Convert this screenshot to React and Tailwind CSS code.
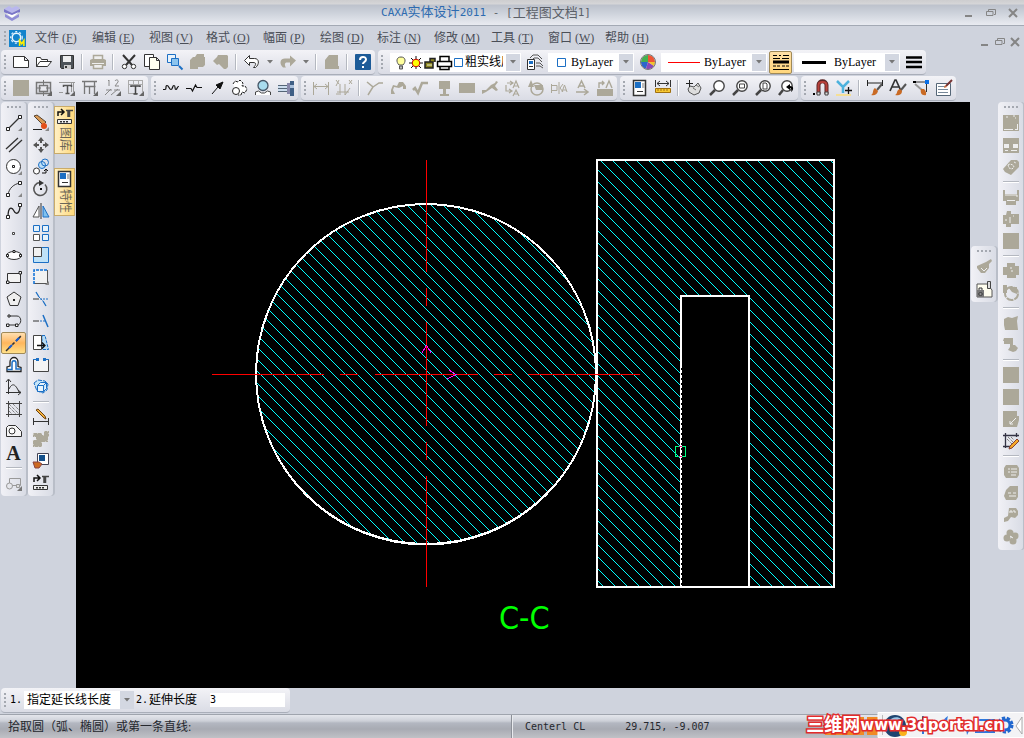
import React, { useState } from 'react';
import clsx from 'clsx';

const G = '#aca899';
const K = '#333333';
const B = '#1c6fc4';

// All icons are drawn on a 16x16 grid
const icons = {
  new: <path d="M.5 2.500h11l4 4v7H.5zM11.500 2.500v4h4" fill="#fff" stroke={K} />,
  open: <path d="M.5 12.500v-9h4l1 2h6v2M.5 12.500l3.500-5h11.500l-4 5z" fill="#fff" stroke={K} />,
  save: <><path d="M1.500 1.500h13v13h-12l-1-1z" fill="#4d5358" stroke={K} /><path d="M4 2h8v6H4z" fill="#eee" /><path d="M5 11h7v4H5z" fill="#ccc" /><path d="M6 12h2v2H6z" fill={K} /></>,
  print: <><path d="M3.500 5V1.500h9V5" fill="#eee" stroke={G} strokeWidth="1.500" /><path d="M0 6l2-1h12l2 1v6H0z" fill={G} /><path d="M2 9.500h12" stroke="#eee" /><path d="M3.500 11v3.500h9V11" fill="#eee" stroke={G} strokeWidth="1.500" /></>,
  cut: <><path d="M2 1l9 10M14 1L5 11" stroke={K} strokeWidth="2" /><circle cx="3.500" cy="12.500" r="2.200" fill="#fff" stroke={K} /><circle cx="12.500" cy="12.500" r="2.200" fill="#fff" stroke={K} /></>,
  copy: <><path d="M.5.5h9v12h-9z" fill="#fff" stroke={K} /><path d="M5.500 3.500h7l3 3v9h-10zM12.500 3.500v3h3" fill="#fffff0" stroke={K} /></>,
  zoomWin: <><path d="M.5.5h8v8h-8z" fill="#e8f2fa" stroke={B} /><path d="M4.500 4.500h7v7h-7z" fill="#8cc4ee" stroke={B} /><path d="M12 12l3.500 3.500" stroke={B} strokeWidth="2" /></>,
  paste: <path d="M5 3l2-3h7v3h1v8l-2 2H8v2H0V6l3-3z" fill={G} />,
  paste2: <path d="M5 1h9l1 1v11l-2 2h-2l-5-5-2 1-4-4 4-4z" fill={G} />,
  undo: <path d="M.5 6.500l5-5v3h5c5 0 5 6 1 9h-2c3-3 3-5-.5-5H5.500v3z" fill="#fff" stroke={K} />,
  redo: <path d="M16 6.500l-6-5v3H5c-5 0-6 5-2 9h3c-2-3-1-5 1-5h3v4z" fill={G} />,
  page: <path d="M1 6l4-5h9v11h1v3H1z" fill={G} />,
  help: <><rect x="0" y="0" width="16" height="16" rx="1" fill="#1c5b98" /><path d="M5 6c0-4 6-4 6-.5C11 8 8 8 8 10M8 12v2" stroke="#fff" strokeWidth="2" fill="none" /></>,
  layers: <><path d="M3 4l3-3h5l4 4M5 6l2-2h4l4 4M9 9h4l3 3M9 12h4l3 2" fill="none" stroke="#555" /><path d="M.5 5.500h7v10h-7z" fill="#fff" stroke={K} /><path d="M2 7h4v3H2z" fill={B} /><path d="M2 12.500h4" stroke={K} /></>,
  ball: <><circle cx="8" cy="8" r="7.500" fill="#ddd" /><path d="M8 8V1a7 7 0 0 1 7 7z" fill="#ee5533" /><path d="M8 8V1a7 7 0 0 0-7 7z" fill="#45b050" /><path d="M8 8H1a7 7 0 0 0 5 6.700z" fill="#2b66cc" /><path d="M8 8l-2 6.700A7 7 0 0 0 14 12z" fill="#8b46b8" /><path d="M8 8h7a7 7 0 0 1-1 4z" fill="#f2c22e" /><circle cx="8" cy="8" r="7.500" fill="none" stroke="#777" /></>,
  dashes: <><path d="M0 1.500h4M6 1.500h2M10 1.500h6" stroke="#000" /><path d="M0 4.500h7M9 4.500h7" stroke="#000" /><path d="M0 8h16" stroke="#000" strokeWidth="3" /><path d="M0 12h3M4 12h3M9 12h3M13 12h3M0 15.500h16" stroke="#000" /></>,
  weights: <path d="M0 3.500h16M0 8h16M0 13h16" stroke="#000" strokeWidth="2.500" />,

  block: <path d="M0 0h16v16H0z" fill={G} />,
  frame: <><path d="M.5 2.500h14v11H.5zM3.500 5.500h8v6h-8z" fill="none" stroke="#777" strokeWidth="1.500" /><path d="M7.500 0v5M7.500 11v5M0 8h5M10 8h5" stroke="#777" /><path d="M5 7h5v3H5z" fill="#e8e9ee" /><path d="M16 11v5h-5z" fill="#666" /></>,
  titleT: <><path d="M0 2.500h16M0 12.500h4M14.500 3v9M12.500 3v9" stroke="#999" /><path d="M4.500 7V5.500h8V7M8.500 6v7M6.500 13.500h4" stroke="#555" strokeWidth="1.500" fill="none" /><path d="M16 11v5h-5z" fill="#666" /></>,
  grid: <><path d="M0 1.500h15M2.500 6.500h11M2.500 1v13M7.500 6v8M12.500 2v12" stroke="#777" strokeWidth="1.300" /><path d="M16 11v5h-5z" fill="#666" /></>,
  seq: <><path d="M3 1l1-1v6M10 1c1-2 4-1 3 1l-3 4h4M0 15l6-6M6 15l7-6M1 10h6M9 10h6" fill="none" stroke="#888" /><path d="M16 11v5h-5z" fill="#666" /></>,
  tableT: <><path d="M.5 0v14M0 .5h15M0 4.500h15M0 13.500h10M14.500 0v12M5.500 0v4M10.500 0v4" stroke="#aaa" /><path d="M3 7V6h9v1M7.500 6v8M5.500 14h4" stroke="#444" strokeWidth="1.500" fill="none" /><path d="M16 11v5h-5z" fill="#666" /></>,
  wave: <path d="M0 9.500h2c2 0 0-4 2-4s2 4 4 4 1-4 3-4 0 4 2 4c1.500 0 .5-3 3-3" fill="none" stroke="#111" strokeWidth="1.200" />,
  breakLine: <path d="M0 8.500h5l1.500 2.500 3-6L11 7.500h5" fill="none" stroke="#111" strokeWidth="1.200" />,
  arrow: <path d="M3 14l6-7M14 2L7 5l4 4z" fill="#111" stroke="#111" />,
  gears: <><path d="M1 4l2-3 3 1 2-2 3 3-1 3h3l2 3-2 4-3-1-1 3h-3" fill="#fff" stroke="#222" strokeDasharray="3 1" /><circle cx="4" cy="11" r="3.500" fill="#fff" stroke="#222" /><circle cx="4" cy="11" r="1" /></>,
  mag: <><circle cx="8" cy="5.500" r="5" fill="#a8dcee" stroke="#456" strokeWidth="1.300" /><path d="M.5 15v-3l3-1 3 2h3l3-2 3 1v3" fill="#fff" stroke="#444" /></>,
  shaft: <><path d="M0 5h9v7H0z" fill="#cde" /><path d="M0 5.500h9M0 8.500h9M0 11.500h9" stroke="#567" /><path d="M9 3h3v11H9z" fill="#88a" /><path d="M12 1h4v15h-4z" fill="#3f5f85" /><path d="M12 5h4v3h-4z" fill="#a9c0dc" /></>,
  dimH: <path d="M.5 2v13M15.500 2v13M1 6.500h14M4 4L1 6.500 4 9M12 4l3 2.500L12 9" fill="none" stroke={G} />,
  dimX: <path d="M0 0l3 4M3 0L0 6M13 0l3 4M16 0l-3 4M1 12h12M4 4v11M9 4v11l5-7M0 14h3" fill="none" stroke={G} />,
  chamfer: <path d="M0 2l6 5-5 8M6 7l6-4h4" fill="none" stroke={G} strokeWidth="1.500" />,
  tol: <path d="M1 14v-4l2-5 4 1 2-4h4l3 4v3h-3V6l-4 2-5-1-1 3 2 4z" fill={G} />,
  rough: <path d="M0 10l2-2 3 5 4-10h6" fill="none" stroke={G} strokeWidth="2.500" />,
  datum: <path d="M3 1h11v8H10v5h3v2H4v-2h3V9H3z" fill={G} />,
  rect: <path d="M0 3h16v10H0z" fill={G} />,
  weld: <path d="M0 14v-4l4 0 5-5 4-2 1-2 2 1-3 4 3 4-2 1-4-3-6 4z" fill={G} />,
  textFlow: <path d="M2 3h5M5 1l3 2-3 2M1 5v6h5M4 9l3 2-3 2M8 8l3-7 3 7M9 6h4M8 16l3-6 3 6M9 14h4" fill="none" stroke={G} strokeWidth="1.200" />,
  cycle: <><circle cx="9" cy="9" r="6" fill="none" stroke={G} strokeWidth="1.500" /><path d="M6 5h9v5H8zM0 7l3-7 3 7z" fill={G} /></>,
  ka: <path d="M.5 4v9M0 5.500h6v5H1M8 2v12M9 8l3-4M9 8l3 4M11 12l2.500-7 2.500 7M12 10h3" fill="none" stroke={G} />,
  aLine: <path d="M4 8l3.500-7L11 8M5 6h5M2 12h11M10 9l4 3-4 3" fill="none" stroke={G} strokeWidth="1.500" />,
  aBox: <><path d="M0 9h16v7H0z" fill={G} /><path d="M2 8V3h5M5 1l2 2-2 2M9 8l3-7 3 7" fill="none" stroke={G} strokeWidth="1.400" /></>,
  props: <><path d="M1.500.5h12v15h-12z" fill="#fff" stroke={K} strokeWidth="1.500" /><path d="M3 2h6v6H3z" fill={B} /><path d="M10 3h3v5h-3z" fill="#bbb" /><path d="M5 11.500h6" stroke={K} /></>,
  ruler: <><path d="M.5 0v7M15.500 0v7M2 3.500h12M5 1L2 3.500 5 6M11 1l3 2.500L11 6" fill="none" stroke="#333" /><path d="M.5 8.500h15v4H.5z" fill="#f7c832" stroke="#a07010" /><path d="M3 9v2M6 9v2M9 9v2M12 9v2" stroke="#a07010" /></>,
  hand: <><path d="M4 6l4 1 4-4 3 5-2 5-5 2-5-3-1-3z" fill="#ddd" stroke="#555" /><path d="M7 8l3 2M10 5l3 2" stroke="#777" /><path d="M3.500 0v7M0 3.500h7" stroke="#222" /></>,
  lens: <><circle cx="10" cy="6" r="5.200" fill="#fff" stroke="#444" strokeWidth="1.400" /><path d="M6 10l-5 5" stroke="#444" strokeWidth="2.500" /></>,
  lensBox: <><circle cx="10" cy="6" r="5.200" fill="#fff" stroke="#444" strokeWidth="1.400" /><path d="M7.500 4h5v4h-5z" fill="none" stroke="#444" /><path d="M6 10l-5 5" stroke="#444" strokeWidth="2.500" /></>,
  lensPage: <><circle cx="10" cy="6" r="5.200" fill="#fff" stroke="#444" strokeWidth="1.400" /><path d="M8 3h3l1 1v5H8z" fill="none" stroke="#444" /><path d="M6 10l-5 5" stroke="#444" strokeWidth="2.500" /></>,
  lensBack: <><circle cx="9" cy="6" r="5.200" fill="#fff" stroke="#444" strokeWidth="1.400" /><path d="M8 7l4-3v2c4 0 4 4 1 6 1-3 0-4-1-4v2z" fill="#000" /><path d="M5 10l-4 5" stroke="#444" strokeWidth="2.500" /></>,
  magnet: <><path d="M5.500 14V5c0-5 8-5 8 0v9" fill="none" stroke="#5a2626" strokeWidth="4" /><path d="M5.500 13V5c0-4 8-4 8 0v8" fill="none" stroke="#b8403a" strokeWidth="2" /><path d="M4 12h3v3H4zM12 12h3v3h-3z" fill="#ddd" stroke="#444" /><path d="M0 13h2v2H0z" fill="#000" /></>,
  axes: <><path d="M1 1l6 6 6-6M7 7v6" fill="none" stroke="#4db2dd" strokeWidth="2.500" /><path d="M12.500 7v7M9 10.500h7" stroke="#111" strokeWidth="1.300" /><path d="M0 15h15" stroke="#f5df95" strokeWidth="2" /></>,
  brushDim: <><path d="M.5 0v6M15.500 0v6M1 3h14" stroke="#222" /><path d="M15 4l-5 6" stroke="#555" strokeWidth="2" /><path d="M8 8l3 3c-1 4-4 5-7 4 3-1 1-5 4-7z" fill="#c96a24" /></>,
  brushA: <><path d="M0 11L5 0h1l5 11M2 7h7" fill="none" stroke="#333" strokeWidth="1.700" /><path d="M16 4l-5 6" stroke="#555" strokeWidth="2" /><path d="M10 9l2 2c0 4-4 5-7 4 3-1 1-5 5-6z" fill="#c96a24" /></>,
  brushNode: <><path d="M1 2h11M13.500 3v9" stroke="#333" /><path d="M0 1h3v2H0z" fill="#000" /><path d="M12 0h4v4h-4z" fill="#0a70e8" /><path d="M2 4l7 6" stroke="#999" strokeWidth="2" /><path d="M8 9h3c3 3 2 5 2 6-4 1-6-2-5-6z" fill="#c96a24" /></>,
  editTable: <><path d="M.5 3.500h14v12H.5z" fill="#fff" stroke="#567" /><path d="M2 6.500h7M2 9.500h10M2 12.500h10" stroke="#789" /><path d="M16 0l-6 6" stroke="#733" strokeWidth="2" /><path d="M9 5l2 2-3 1z" fill="#c63" /></>,

  line: <><path d="M2 14L14 2" stroke={K} strokeWidth="1.300" /><path d="M.5 12.500h3v3h-3zM12.500.5h3v3h-3z" fill="#fff" stroke="#222" /><path d="M16 12v4h-4z" fill="#888" /></>,
  parallel: <path d="M0 12L12 1M3 15L16 3" stroke={K} strokeWidth="1.300" />,
  circle: <><circle cx="7.500" cy="7.500" r="7" fill="#fff" stroke={K} /><path d="M6.500 6.500h2v2h-2z" stroke="#222" /><path d="M16 12v4h-4z" fill="#888" /></>,
  arc: <><path d="M2 14C3 7 8 3 14 2" fill="none" stroke={K} /><path d="M.5 12.500h3v3h-3zM12.500.5h3v3h-3z" fill="#fff" stroke="#222" /><path d="M16 12v4h-4z" fill="#888" /></>,
  spline: <><path d="M2 14C2 3 6 4 8 8s6 3 6-6" fill="none" stroke="#222" strokeWidth="1.300" /><path d="M.5 12.500h3v3h-3zM12.500.5h3v3h-3z" fill="#fff" stroke="#222" /></>,
  point: <path d="M6.500 7.500h2v2h-2z" fill="#fff" stroke="#444" />,
  ellipse: <><ellipse cx="8" cy="8.500" rx="7.500" ry="4" fill="#fff" stroke={K} /><path d="M.5 7.500h2v2h-2zM13.500 7.500h2v2h-2zM7 3.500h2v2H7z" fill="#fff" stroke="#222" /></>,
  rectangle: <><path d="M1.500 4.500h13v9h-13z" fill="#f3f3f3" stroke={K} /><path d="M.5 12h2.500v2.500H.5zM13 2.500h2.500V5H13z" fill="#fff" stroke="#222" /></>,
  polygon: <><path d="M8 1l7 5-3 8.500H4L1 6z" fill="#eee" stroke={K} /><path d="M7 8h2v2H7z" fill="#222" /></>,
  polyline: <><path d="M4 3h7c5 0 5 9 0 9H3" fill="none" stroke={K} /><path d="M2 2h2v2H2zM.5 11h2.500v2.500H.5zM9.500 11h2.500v2.500H9.500z" fill="#fff" stroke="#222" /></>,
  center: <><path d="M0 16L16 0" stroke="#333" strokeDasharray="7 2 3 2" strokeWidth="1.500" /><path d="M3 13l3-3M10 6l3-3" stroke="#1b5fd0" strokeWidth="2" /></>,
  offset: <><path d="M1 14.500h14v-4l-3-1V5c0-6-8-6-8 0v4l-3 1z" fill="#fff" stroke="#222" strokeWidth="1.300" /><path d="M1 12.500h5V6c0-3 4-3 4 0v6h5" fill="none" stroke={B} strokeWidth="1.500" /></>,
  formula: <path d="M2.500 15V1M0 3l2.500-3L5 3M0 13.500h15M12 11l3 2.500-3 2.500M3 10c3-6 6-6 10 3" fill="none" stroke="#333" />,
  hatch: <><path d="M2.500 0v16M13.500 0v16M0 2.500h16M0 13.500h16" stroke="#444" /><path d="M3 10l4 4M3 6l8 8M3 3l10 10M7 3l6 6" stroke="#555" strokeDasharray="1 1" /></>,
  region: <><path d="M.5 4.500l2-2h7l6 6v5h-15z" fill="#f6f6f6" stroke={K} /><circle cx="6" cy="8" r="3" fill="#fff" stroke={K} /></>,
  blockIns: <><path d="M3.500 3.500h11v7h-11z" fill="none" stroke="#999" /><circle cx="3.500" cy="11" r="3" fill="#e6e7ec" stroke="#999" /><path d="M10.500 9.500h3v3h-3z" fill="#ddd" stroke="#999" /><path d="M16 11v5h-5z" fill="#777" /></>,
  eraser: <><path d="M1 1l9 9 3-3L4 0z" fill="#d99a55" stroke="#543" /><circle cx="11" cy="11" r="3" fill="#e3501a" /><path d="M0 14.500h9" stroke="#222" /><path d="M16 12v4h-4z" fill="#888" /></>,
  move: <path d="M8 0l3 4H9v2H7V4H5zM8 16l3-4H9v-2H7v2H5zM0 8l4-3v2h2v2H4v2zM16 8l-4-3v2h-2v2h2v2z" fill="#555" />,
  copyObj: <><circle cx="9" cy="6" r="3.500" fill="#bfe0f7" stroke={B} /><circle cx="12" cy="3.500" r="3.500" fill="none" stroke={B} /><circle cx="3.500" cy="12" r="3" fill="#fff" stroke="#333" /><path d="M9 14h4v-3M11 12l2-2 2 2" fill="none" stroke="#111" /></>,
  rotate: <><path d="M7 1.500a6.500 6.500 0 1 0 5 2" fill="none" stroke="#555" strokeWidth="1.500" /><path d="M6-1l5 3-5 3z" fill="#333" /><path d="M7 7h2v2H7z" fill="#111" /></>,
  mirror: <><path d="M6 3v11H0z" fill="#fff" stroke="#555" /><path d="M8 0v16" stroke="#333" /><path d="M10 3v11h6z" fill="#7fc1ee" stroke={B} /></>,
  array: <><path d="M.5.5h6v6h-6zM9.500.5h6v6h-6z" fill="#e5f2fb" stroke={B} /><path d="M9.500 9.500h6v6h-6z" fill="#e5f2fb" stroke={B} /><path d="M.5 9.500h6v6h-6z" fill="#fff" stroke="#555" /></>,
  scale: <><path d="M.5.5h15v15H.5z" fill="#bfe2f8" stroke={B} /><path d="M.5.5h8v9h-8z" fill="#f1f1f1" stroke="#444" /></>,
  stretch: <><path d="M1 1h13v13H1z" fill="#f1f1f1" /><path d="M1 14.500h13.500V1" stroke="#555" /><path d="M1 15V1h13" fill="none" stroke="#0a6fd8" strokeDasharray="3 1" strokeWidth="1.500" /><path d="M16 12v4h-4z" fill="#888" /></>,
  trim: <><path d="M3 1l3 5M10 10l3 5" stroke={B} strokeWidth="1.300" /><path d="M0 8h6" stroke="#333" /><path d="M7 8h9M6 6l4 4" stroke={B} strokeDasharray="2 1" /></>,
  extend: <><path d="M10 2l5 12" stroke={B} strokeWidth="1.500" /><path d="M0 8h6" stroke="#333" /><path d="M7 8h5" stroke={B} strokeDasharray="2 1" /></>,
  stretchPage: <><path d="M9 .5h3l3.500 14H9z" fill="#b6dcf5" stroke={B} strokeDasharray="3 1" /><path d="M.5.5h8v14h-8z" fill="#fff" stroke="#444" /><path d="M4 10.500h8M9 7.500l3 3-3 3" fill="none" stroke="#111" strokeWidth="1.300" /></>,
  breakObj: <><path d="M.5 3v11.500h15V3" fill="#f4f4f4" stroke="#444" /><path d="M0 2.500h4M12 2.500h4" stroke={B} /><path d="M3 1h3v3H3zM10 1h3v3h-3z" fill={B} /></>,
  explode: <><path d="M1 4l4-3 7 1 3 3-1 6-4 3-6-2z" fill="#c5e4f8" stroke={B} strokeDasharray="4 1" /><path d="M4.500 6.500h6v6h-6zM4.500 6.500l3-3h6l-3 3M13.500 3.500v6l-3 3" fill="#e8f4fc" stroke={B} /></>,
  pencilDim: <><path d="M.5 9v7M15.500 9v7M1 12.500h14" stroke="#333" /><path d="M3 1l8 8 2 1-1-3-7-7z" fill="#f5b13c" stroke="#6b4210" /></>,
  puzzle: <path d="M0 2h9v2h2V0h5v6h-1v5H9v5H0V9h3V6H0z" fill={G} stroke="#e8e8e8" strokeDasharray="1 3" />,
  brushCard: <><path d="M4.500.5h11v11h-11z" fill="#fff" stroke="#445" /><path d="M6 2h6v6H6z" fill="#14508c" /><path d="M0 9h6l3 2-3 4H2z" fill="#cc6a22" stroke="#844" /></>,
  library: <><path d="M1 7V3h5M4 0l3 3-3 3" fill="none" stroke="#111" strokeWidth="1.500" /><path d="M9 1.500h7M12.500 2v6M11 2v6" stroke="#444" strokeWidth="1.500" /><path d="M.5 10.500h14v4H.5z" fill="#eee" stroke="#333" /><path d="M3 12h2v1.500H3zM6 12h2v1.500H6zM9 12h2v1.500H9z" fill="#333" /></>,

  rBlock: <><path d="M0 0h16v16H0z" fill={G} /><path d="M3 2h2M10 1h2M12 3h1M14.500 9v5M1 14.500h9M12 14.500h3" stroke="#eee" /></>,
  rPanel: <><path d="M0 1h16v15H0z" fill={G} /><path d="M1 7h5v4H1zM10 7h5v4h-5zM2 13h3v1H2zM8 13h6v1H8z" fill="#eee" /></>,
  rGear: <><path d="M8 1h6l2 2v5l-8 8-6-3-2-3z" fill={G} /><path d="M5 6l2-1 3 1 1 2-2 2-3-1zM11 3l2 1" fill="none" stroke="#eee" strokeDasharray="2 1" /></>,
  rPrint: <><path d="M0 1h2v4h12V1h2v11h-3v4H3v-4H0z" fill={G} /><path d="M2 6h12v2M4 11.500h8" fill="none" stroke="#eee" /></>,
  rPuzzle: <><path d="M4 0h4v3h8v10H8v3H3v-3H0V4h3z" fill={G} /><path d="M7 6v6M10 5h1M3 8v2" stroke="#eee" /></>,
  rChip: <><path d="M4 0h8v3h4v9h-3v3H4v-3H0V4h4z" fill={G} /><path d="M7 5h2M8 8h2" stroke="#eee" /></>,
  rCycle: <><circle cx="8.500" cy="8.500" r="6.500" fill="none" stroke={G} strokeWidth="2" strokeDasharray="7 1" /><path d="M5 2h9v7l-5-2zM0 0h4v8H0z" fill={G} /></>,
  rFolder: <path d="M1 4l4-2 4 1 6-2-1 5 1 9H2l-1-5z" fill={G} />,
  rFlow: <path d="M1 1h9v7h2l3 3-2 3-3 1-5-2 2-3V7H1V4H0z" fill={G} />,
  rDiag: <><path d="M0 0h14v5h2v4l-2 7H0z" fill={G} /><path d="M7 13l6-6M7 10v3h3" fill="none" stroke="#eee" /></>,
  hatchEdit: <><path d="M2.500 0v15M0 2.500h16M13.500 0v4M0 13.500h8" stroke="#334" strokeWidth="1.300" /><path d="M4 6l5 5M5 4l6 6M8 4l3 3" stroke="#555" strokeDasharray="1 1" /><path d="M14 6l2 2-7 7-3 1 1-3z" fill="#f5a928" stroke="#843" /></>,
  rList: <><path d="M3 2h11l2 3v7l-2 3H3l-2-3V5z" fill={G} /><path d="M5 6h2M8 6h6M5 9h2M8 9h6M8 12h5" stroke="#eee" /></>,
  rPage: <><path d="M7 1h8v11l-2 3H3l-2-4 2-6z" fill={G} /><path d="M5 8h3M10 8h3M6 11h7" stroke="#eee" /></>,
  rLens: <><path d="M6 1h7l2 3v4l-3 3-4-1-3 4-4 1v-4l4-2z" fill={G} /><path d="M7 6V4h2v2M11 3v2h2" fill="none" stroke="#eee" /></>,
  rBubbles: <><circle cx="7" cy="4" r="3.500" fill={G} /><circle cx="12" cy="7" r="3.500" fill={G} /><circle cx="4" cy="9" r="3.500" fill={G} /><circle cx="10" cy="12" r="3.500" fill={G} /><path d="M7 7l3 2" stroke="#eee" /></>,
  tag: <><path d="M1 7l9-4 5-3 1 2-3 3v4l-4 5H5L1 9z" fill={G} /><path d="M5 9l3 3 3-3" stroke="#eee" /></>,
  lockCard: <><path d="M1 3h10l5 6v7H1z" fill="#fffef0" stroke="#555" /><path d="M11.500.5h3v7h-3z" fill="#ddd" stroke="#444" /><path d="M1 9h7v7H1z" fill="#777" /><path d="M3 9V7h3v2M3 12h3v2H3z" fill="#eee" stroke="#333" /></>,
};

const Icon = ({ name }) => (
  <svg viewBox="0 0 16 16" className="h-4 w-4 shrink-0 overflow-visible" fill="none" aria-hidden="true">
    {icons[name]}
  </svg>
);

const Grip = ({ vertical }) => (
  <div className={clsx('flex shrink-0 items-center justify-center gap-0.5', vertical ? 'h-2.5 w-full' : 'w-2 flex-col')}>
    {[0, 1, 2, 3].map((i) => (
      <span key={i} className="h-0.5 w-0.5 bg-[#a4a8b0]" />
    ))}
  </div>
);

const Caret = () => (
  <svg viewBox="0 0 6 4" className="h-1 w-1.5" aria-hidden="true">
    <path d="M0 0h6L3 3.500z" fill="#777" />
  </svg>
);

const Tool = ({ name, vertical, active }) => {
  if (name === '|') {
    return vertical ? (
      <div className="flex h-2 w-full items-center justify-center">
        <span className="h-0.5 w-4 border-b border-white bg-[#b4b8c0]" />
      </div>
    ) : (
      <div className="flex w-2 shrink-0 items-center justify-center">
        <span className="h-4 w-0.5 border-r border-white bg-[#b4b8c0]" />
      </div>
    );
  }
  if (name === 'v') {
    return (
      <button aria-label="more" className="flex w-[13px] shrink-0 items-center justify-center">
        <Caret />
      </button>
    );
  }
  return (
    <button
      aria-label={name}
      className={clsx(
        'flex shrink-0 items-center justify-center',
        vertical ? 'h-[22px] w-full' : 'h-[23px] w-[23px]',
        active && 'rounded-xs border border-[#a08a58]',
        active && (vertical ? 'bg-gradient-to-b from-[#ffdfb0] via-[#ffb65c] to-[#ffe08a]' : 'bg-gradient-to-b from-[#ffe0a6] to-[#ffd67c]')
      )}
    >
      {name === 'text' ? (
        <span className="font-['Liberation_Serif',serif] text-[20px] leading-5 font-bold text-[#222]">A</span>
      ) : (
        <Icon name={name} />
      )}
    </button>
  );
};

const Bar = ({ tools, children }) => (
  <div className="flex h-[25px] items-center rounded border-b border-[#a9aeb9] bg-gradient-to-b from-[#f3f3f7] to-[#dadce5] pr-px">
    <Grip />
    {tools?.map((t, i) => <Tool key={i} name={t} />)}
    {children}
  </div>
);

const SideBar = ({ tools, activeTool, className }) => (
  <div className={clsx('flex w-[25px] shrink-0 flex-col self-start rounded-sm bg-gradient-to-r from-[#f1f1f6] to-[#d9dce5] pb-0.5 shadow-[2px_0_0_#b9bec8]', className)}>
    <Grip vertical />
    {tools.map((t, i) => <Tool key={i} name={t} vertical active={t === activeTool} />)}
  </div>
);

const Combo = ({ label, className, icon, value, selectClass }) => (
  <div className={clsx('flex h-[19px] shrink-0 items-stretch border border-white bg-white', className)}>
    {icon}
    <select
      aria-label={label}
      className={clsx("min-w-0 flex-1 appearance-none overflow-hidden bg-white text-[12px] leading-4 whitespace-nowrap text-black outline-none font-['Liberation_Serif','Noto_Sans_CJK_SC',serif]", selectClass)}
    >
      <option>{value}</option>
    </select>
    <span className="flex w-3.5 shrink-0 items-center justify-center bg-[#d3d7e1]">
      <Caret />
    </span>
  </div>
);

const LayerIcons = () => (
  <svg viewBox="0 0 74 17" className="h-[17px] w-[74px] shrink-0" fill="none" aria-hidden="true">
    <path d="M8 11C5 8 5 3 10 3s5 5 2 8z" fill="#ffff9c" stroke="#555" />
    <path d="M8.500 12h3v3h-3z" fill="#bbb" stroke="#555" />
    <path d="M25 2v13M18 9h14M20 4l10 10M30 4L20 14" stroke="#111" />
    <circle cx="25" cy="9" r="3.800" fill="#ffff00" stroke="#c00" />
    <path d="M34 8h8v6h-8zM39 8V4.500h5V8" stroke="#222" strokeWidth="1.500" fill="#8a8420" />
    <path d="M36 11h5" stroke="#eec" />
    <path d="M49 7V2.500h9V7M46.500 7.500h14v5h-14zM49 12.500h9v3h-9z" fill="#fff" stroke="#000" strokeWidth="1.500" />
    <path d="M63.500 4.500h8v8h-8z" fill="#fff" stroke={B} />
  </svg>
);

const SquareIcon = () => (
  <svg viewBox="0 0 22 17" className="h-[17px] w-[22px] shrink-0" aria-hidden="true">
    <path d="M8.500 4.500h8v8h-8z" fill="none" stroke={B} />
  </svg>
);

const menus = [
  ['文件', 'F'], ['编辑', 'E'], ['视图', 'V'], ['格式', 'O'], ['幅面', 'P'], ['绘图', 'D'],
  ['标注', 'N'], ['修改', 'M'], ['工具', 'T'], ['窗口', 'W'], ['帮助', 'H'],
];

const rowOneTools = ['new', 'open', 'save', '|', 'print', '|', 'cut', 'copy', 'zoomWin', 'paste', 'paste2', '|', 'undo', 'v', 'redo', 'v', '|', 'page', '|', 'help'];

const rowTwoBars = [
  ['block', 'frame', 'titleT', 'grid', 'seq', 'tableT'],
  ['wave', 'breakLine', 'arrow', 'gears', 'mag', 'shaft'],
  ['dimH', 'dimX', '|', 'chamfer', 'tol', 'rough', 'datum', 'rect', 'weld', 'textFlow', 'cycle', 'ka', 'aLine', 'aBox'],
  ['props', 'ruler', '|', 'hand', 'lens', 'lensBox', 'lensPage', 'lensBack'],
  ['magnet', 'axes', '|', 'brushDim', 'brushA', 'brushNode', 'editTable'],
];

const drawTools = ['line', 'parallel', 'circle', 'arc', 'spline', 'point', 'ellipse', 'rectangle', 'polygon', 'polyline', 'center', 'offset', 'formula', 'hatch', 'region', 'text', '|', 'blockIns'];
const editTools = ['eraser', 'move', 'copyObj', 'rotate', 'mirror', 'array', 'scale', 'stretch', 'trim', 'extend', 'stretchPage', 'breakObj', 'explode', '|', 'pencilDim', 'puzzle', 'brushCard', 'library'];
const rightTools = ['rBlock', 'rPanel', 'rGear', '|', 'rPrint', 'rPuzzle', 'block', '|', 'rChip', 'rCycle', '|', 'rFolder', 'rFlow', '|', 'block', 'block', 'rDiag', 'hatchEdit', '|', 'rList', 'rPage', 'rLens', 'rBubbles'];

const WindowButtons = ({ className }) => (
  <div className={clsx('flex items-center text-[#858585]', className)}>
    <button aria-label="Minimize">
      <svg viewBox="0 0 10 10" className="h-2.5 w-2.5"><path d="M1 7h7v2H1z" fill="currentColor" /></svg>
    </button>
    <button aria-label="Restore">
      <svg viewBox="0 0 10 10" className="h-2.5 w-2.5" fill="none"><path d="M2.500 3V1.500h7V6.500H8M.5 3.500H7v4H.5z" stroke="currentColor" /></svg>
    </button>
    <button aria-label="Close">
      <svg viewBox="0 0 10 10" className="h-2.5 w-2.5"><path d="M1 1l8 8M9 1L1 9" stroke="currentColor" strokeWidth="2" /></svg>
    </button>
  </div>
);

// Section hatch: 45 degree lines snapped to whole pixels
const hatchLines = (x0, x1, yStart, spacing, count) =>
  Array.from({ length: count }, (_, i) => {
    const y = Math.round(yStart + i * spacing);
    return `M${x0} ${y}L${x1} ${y + x1 - x0}`;
  }).join('');

const Drawing = () => (
  <svg viewBox="76 102 894 586" preserveAspectRatio="xMidYMid meet" className="block h-full w-full" fill="none" shapeRendering="crispEdges">
    <defs>
      <clipPath id="disc"><circle cx="426" cy="374" r="170" /></clipPath>
      <clipPath id="plate"><path d="M597 160h237v427h-85V296h-68v291h-84z" /></clipPath>
    </defs>
    <g stroke="#00ffff" strokeWidth="1">
      <path clipPath="url(#disc)" d={hatchLines(250, 600, -122, 12.15, 56)} />
      <path clipPath="url(#plate)" d={hatchLines(598, 836, -72, 12.1, 56)} />
    </g>
    <g stroke="#ffffff" strokeWidth="2">
      <circle cx="426" cy="374" r="170" />
      <path d="M256 375a170 170 0 0 0 340 0" strokeWidth="1" />
      <path d="M597 160h237v427H597zM681 365v-69h68v291" />
      <path d="M680.500 365v222" strokeWidth="1" />
      <path d="M681.500 365v222" strokeWidth="1" strokeDasharray="3 2" />
    </g>
    <path stroke="#ff0000" d="M426.500 160v112M426.500 288v18M426.500 322v104M426.500 442v18M426.500 476v111M212 374.500h112M340 374.500h18M375 374.500h103M494 374.500h18M528 374.500h112" />
    <path stroke="#ff00ff" d="M421.500 353.500l5-8 5 8M449 370l7 4.500-8.500 4.500" />
    <path stroke="#00ff80" d="M675.500 446.500h10v10h-10z" />
    <path stroke="#ff0080" d="M679 446.500h3M679 456.500h3" />
    <text x="499" y="629" fill="#00ff00" className="font-['Liberation_Sans_Narrow','DejaVu_Sans_Condensed',monospace] text-[32px]">C-C</text>
  </svg>
);

const PanelTab = ({ icon, label }) => (
  <button className="flex w-[21px] flex-col items-center gap-0.5 border border-[#c9ab6a] bg-gradient-to-r from-[#fff0c4] to-[#ffd97a] py-0.5">
    <Icon name={icon} />
    <span className="text-[12px] leading-4 text-[#6a6558] [text-orientation:sideways] [writing-mode:vertical-rl]">{label}</span>
  </button>
);

const TrayPanel = () => (
  <div className="absolute right-0 bottom-0 flex h-[26px] items-center">
    <svg viewBox="0 0 200 26" className="h-[26px] w-[200px]" aria-hidden="true">
      <path d="M1 5h39v18H1zM43 5h12v18H43z" fill="#f08a24" />
      <path d="M54 .5h146v25H54z" fill="#f3f3f5" stroke="#fff" />
      <path d="M58.500 3v20" stroke="#bbb" />
      <circle cx="71" cy="14" r="11" fill="#1d4470" />
      <path d="M64 10c3-5 10-6 13-3-4 0-6 4-13 3z" fill="#9cc6e8" />
      <circle cx="79" cy="20" r="4" fill="#f9b21c" />
      <path d="M99 4v18M92 9h14v8H92z" fill="none" stroke="#2f78dd" strokeWidth="2" />
      <path d="M124 4c-9 5-5 15 5 13-5-2-7-7-5-13z" fill="#2f78dd" />
      <path d="M142 17h4l-3 6z" fill="#2f78dd" />
      <path d="M152 8h18v12h-18z" fill="none" stroke="#2f78dd" strokeWidth="2" />
      <circle cx="181" cy="13" r="6.500" fill="none" stroke="#2168cf" strokeWidth="4" strokeDasharray="3 1.500" />
      <circle cx="181" cy="13" r="5" fill="none" stroke="#2168cf" strokeWidth="3" />
      <path d="M198 5l-6 9 6 8z" fill="#fff" stroke="#aaa" />
    </svg>
    <a
      href="#portal"
      className="absolute right-5 flex items-center text-[15px] leading-5 font-bold whitespace-nowrap text-white [-webkit-text-stroke:3px_#e22b2b] [paint-order:stroke_fill] font-['DejaVu_Sans','Noto_Sans_CJK_SC',sans-serif]"
    >
      <span className="text-[18px]">三维网</span>www.3dportal.cn
    </a>
  </div>
);

export default function App() {
  const [extension, setExtension] = useState('3');

  return (
    <div className="flex h-screen flex-col overflow-hidden bg-[#cfd3dd] font-['Liberation_Serif','Noto_Sans_CJK_SC',sans-serif] text-[12px] leading-4">
      {/* Title bar */}
      <header className="flex h-[26px] shrink-0 items-center border-b border-[#a3a9b4] bg-[linear-gradient(#cdcdcf_0px,#d6d6d8_4px,#bdc2cc_5px,#cdd2db_13px,#e9ebf1_25px)] px-1">
        <svg viewBox="0 0 16 16" className="h-4 w-4" aria-hidden="true">
          <path d="M0 4l5-3 3 2 4-2 4 2-8 5z" fill="#b9b7ee" />
          <path d="M0 4l8 4 8-4v3l-8 4-8-4z" fill="#7a76c8" />
          <path d="M2 8l6 2 7-3-7 6z" fill="#fff" />
          <path d="M1 9l7 4 7-4v3l-7 4-7-4z" fill="#8f8cd6" />
        </svg>
        <h1 className="flex flex-1 items-center justify-center pr-3 font-['DejaVu_Sans_Mono','Noto_Sans_CJK_SC',monospace] text-[11px] whitespace-pre text-[#5b6068]">
          <span className="text-[#2d6bb0]">CAXA<span className="text-[13px]">实体设计</span>2011</span>
          {' - ['}<span className="text-[13px]">工程图文档</span>{'1]'}
        </h1>
        <WindowButtons className="gap-3 pr-0.5" />
      </header>

      {/* Menu bar */}
      <nav className="flex h-6 shrink-0 items-center pr-1 pl-px text-[#4a4e57]">
        <Grip />
        <svg viewBox="0 0 16 16" className="mr-[9px] h-[17px] w-[17px]" aria-hidden="true">
          <path d="M0 0h16v16H0z" fill="#1383cc" />
          <circle cx="7" cy="7" r="4" fill="none" stroke="#e8f5ff" strokeWidth="1.500" />
          <circle cx="7" cy="7" r="5.500" fill="none" stroke="#e8f5ff" strokeDasharray="2 2" />
          <path d="M10 15v-5l2 3 2-3v5" fill="none" stroke="#ffee00" strokeWidth="1.500" />
        </svg>
        {menus.map(([name, key]) => (
          <button key={key} className="w-[57px] text-left whitespace-nowrap">
            {name} (<u>{key}</u>)
          </button>
        ))}
        <WindowButtons className="ml-auto gap-[5px] pt-2" />
      </nav>

      {/* Toolbars */}
      <div className="flex h-[26px] shrink-0 items-start gap-[3px] pl-px">
        <Bar tools={rowOneTools} />
        <Bar>
          <div className="flex items-center gap-0.5 pl-1">
            <Combo label="图层" className="w-[131px]" icon={<LayerIcons />} selectClass="mr-[3px]" value="粗实线层" />
            <Tool name="layers" />
            <Combo label="颜色" className="w-[86px]" icon={<SquareIcon />} value="ByLayer" />
            <Tool name="ball" />
            <Combo
              label="线型"
              className="w-[106px]"
              icon={<span className="mr-1 ml-1.5 h-px w-8 self-center bg-[#ff0000]" />}
              value="ByLayer"
            />
            <Tool name="dashes" active />
            <Combo
              label="线宽"
              className="w-[106px]"
              icon={<span className="mr-2 ml-[7px] h-[3px] w-6 self-center bg-black" />}
              value="ByLayer"
            />
            <Tool name="weights" />
          </div>
        </Bar>
      </div>
      <div className="flex h-[26px] shrink-0 items-start gap-[3px] pl-px">
        {rowTwoBars.map((tools, i) => <Bar key={i} tools={tools} />)}
      </div>

      {/* Workspace */}
      <main className="flex min-h-0 flex-1">
        <div className="flex shrink-0 gap-0.5 pl-px">
          <SideBar tools={drawTools} activeTool="center" />
          <SideBar tools={editTools} />
        </div>
        <div className="flex w-[23px] shrink-0 flex-col items-center gap-3.5 pt-1">
          <PanelTab icon="library" label="图库" />
          <PanelTab icon="props" label="特性" />
        </div>
        <div className="min-w-0 flex-1 bg-black">
          <Drawing />
        </div>
        <div className="flex shrink-0 gap-0.5 px-px">
          <SideBar tools={['tag', 'lockCard']} className="mt-36" />
          <SideBar tools={rightTools} />
        </div>
      </main>

      {/* Command options */}
      <div className="flex h-[26px] shrink-0 pl-px">
        <div className="flex h-[25px] w-[289px] items-center rounded border-b border-[#a9aeb9] bg-gradient-to-b from-[#f3f3f7] to-[#dadce5] text-black">
          <Grip />
          <label htmlFor="mode" className="w-[15px] pl-px font-['DejaVu_Sans_Mono',monospace] text-[10px]">1.</label>
          <div className="flex h-[18px] w-[110px] bg-white">
            <select id="mode" className="min-w-0 flex-1 appearance-none bg-white pl-[3px] whitespace-nowrap outline-none">
              <option>指定延长线长度</option>
            </select>
            <span className="flex w-3.5 items-center justify-center bg-[#d3d7e1]"><Caret /></span>
          </div>
          <label htmlFor="extension" className="ml-0.5 flex w-[74px] items-center">
            <span className="w-[13px] font-['DejaVu_Sans_Mono',monospace] text-[10px]">2.</span>延伸长度
          </label>
          <input
            id="extension"
            value={extension}
            onChange={(e) => setExtension(e.target.value)}
            className="h-3.5 w-[75px] bg-white font-['DejaVu_Sans_Mono',monospace] text-[10px] outline-none"
          />
        </div>
      </div>

      {/* Status bar */}
      <footer className="relative flex h-6 shrink-0 items-center border-t border-[#9fa4ad] bg-[linear-gradient(#e4e6ec_0px,#cdd0d8_6px,#b3b7c1_8px,#a8abb3_14px,#c0c1c6_23px)] text-[#25282e]">
        <p className="h-full w-1/2 border-r border-[#8c9098] pl-2 leading-6">拾取圆（弧、椭圆）或第一条直线:</p>
        <div className="flex h-full items-center gap-10 border-l border-[#e8eaee] pl-3 font-['DejaVu_Sans_Mono',monospace] text-[10px]">
          <span>Centerl CL</span>
          <span>29.715, -9.007</span>
        </div>
        <TrayPanel />
      </footer>
    </div>
  );
}
